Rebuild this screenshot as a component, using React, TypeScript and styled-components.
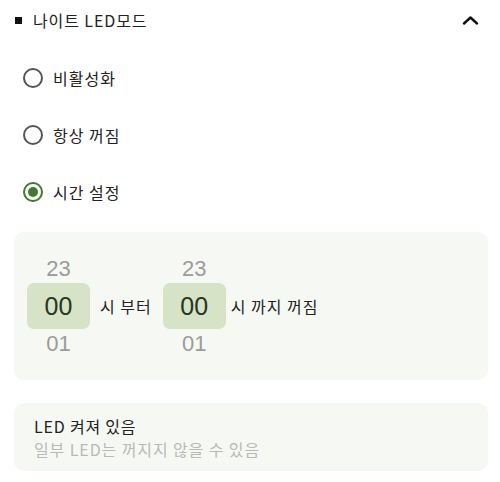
import React from "react";
import styled, { createGlobalStyle } from "styled-components";

const Global = createGlobalStyle`
  html, body { margin: 0; padding: 0; background: #fff; }
  body { font-family: "Noto Sans CJK KR", "Noto Sans", sans-serif; color: #222; }
  * { box-sizing: border-box; }
`;

const Page = styled.div`
  width: 500px;
  padding: 0 12px 0 14px;
  display: flex;
  flex-direction: column;
`;

const Header = styled.div`
  height: 40px;
  display: flex;
  align-items: center;
  padding-left: 1px;
`;

const Bullet = styled.span`
  width: 7px;
  height: 7px;
  background: #111;
  margin-right: 11px;
  flex: none;
`;

const HeaderTitle = styled.span`
  font-size: 16px;
  color: #222;
  flex: 1;
  letter-spacing: 0.9px;
`;

const Chevron = styled.svg`
  width: 17px;
  height: 10px;
  margin-right: 9px;
`;

const RadioGroup = styled.div`
  display: flex;
  flex-direction: column;
  padding-top: 9px;
  margin-bottom: 12px;
`;

const RadioRow = styled.label`
  height: 57px;
  display: flex;
  align-items: center;
  padding-left: 9px;
  font-size: 16px;
  letter-spacing: 1px;
  color: #222;
`;

const RadioCircle = styled.span<{ $checked?: boolean }>`
  width: 20px;
  height: 20px;
  border-radius: 50%;
  border: 2px solid ${(p) => (p.$checked ? "#3f7a2f" : "#555")};
  display: flex;
  align-items: center;
  justify-content: center;
  margin-right: 10px;
  flex: none;
  &::after {
    content: "";
    display: ${(p) => (p.$checked ? "block" : "none")};
    width: 10px;
    height: 10px;
    border-radius: 50%;
    background: #3f7a2f;
  }
`;

const Panel = styled.div`
  background: #f6f8f4;
  border-radius: 10px;
`;

const TimePanel = styled(Panel)`
  padding: 22px 13px;
  display: flex;
  align-items: center;
  margin-bottom: 23px;
`;

const Picker = styled.div`
  width: 63px;
  display: flex;
  flex-direction: column;
  align-items: center;
  font-family: "Liberation Sans", Arial, sans-serif;
`;

const SideNum = styled.div`
  height: 29px;
  display: flex;
  align-items: center;
  justify-content: center;
  font-size: 22px;
  color: #9b9b9b;
`;

const Selected = styled.div`
  width: 63px;
  height: 46px;
  border-radius: 7px;
  background: #d6e3c7;
  display: flex;
  align-items: center;
  justify-content: center;
  font-size: 25px;
  color: #263620;
`;

const Unit = styled.span<{ $ml: number; $mr: number }>`
  font-size: 16px;
  letter-spacing: 1px;
  color: #222;
  margin-left: ${(p) => p.$ml}px;
  margin-right: ${(p) => p.$mr}px;
`;

const InfoPanel = styled(Panel)`
  height: 68px;
  padding: 10px 20px;
  display: flex;
  flex-direction: column;
  justify-content: center;
`;

const InfoTitle = styled.div`
  font-size: 16px;
  letter-spacing: 0.8px;
  color: #222;
  line-height: 24px;
`;

const InfoSub = styled.div`
  font-size: 16px;
  letter-spacing: 0.9px;
  color: #b9b9b9;
  line-height: 22px;
`;

const hours = ["23", "00", "01"];

function HourPicker() {
  return (
    <Picker>
      <SideNum>{hours[0]}</SideNum>
      <Selected>{hours[1]}</Selected>
      <SideNum>{hours[2]}</SideNum>
    </Picker>
  );
}

export default function App() {
  return (
    <>
      <Global />
      <Page>
        <Header>
          <Bullet />
          <HeaderTitle>나이트 LED모드</HeaderTitle>
          <Chevron viewBox="0 0 17 10">
            <polyline points="2,8.5 8.5,2.5 15,8.5" fill="none" stroke="#111" strokeWidth="2.4" strokeLinecap="round" strokeLinejoin="round" />
          </Chevron>
        </Header>
        <RadioGroup>
          <RadioRow>
            <RadioCircle />
            비활성화
          </RadioRow>
          <RadioRow>
            <RadioCircle />
            항상 꺼짐
          </RadioRow>
          <RadioRow>
            <RadioCircle $checked />
            시간 설정
          </RadioRow>
        </RadioGroup>
        <TimePanel>
          <HourPicker />
          <Unit $ml={10} $mr={11}>시 부터</Unit>
          <HourPicker />
          <Unit $ml={5} $mr={0}>시 까지 꺼짐</Unit>
        </TimePanel>
        <InfoPanel>
          <InfoTitle>LED 켜져 있음</InfoTitle>
          <InfoSub>일부 LED는 꺼지지 않을 수 있음</InfoSub>
        </InfoPanel>
      </Page>
    </>
  );
}
